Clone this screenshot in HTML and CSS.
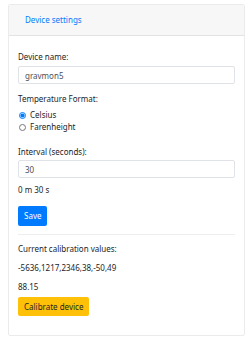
FILE: index.html
```html
<!DOCTYPE html>
<html lang="en">
  <head>
    <meta charset="UTF-8" />
    <meta name="viewport" content="width=device-width, initial-scale=1" />
    <title>Device settings</title>
    <link rel="stylesheet" href="styles.css">
  </head>
  <body>
    <div class="card">
      <div class="card-header">
        <a href="#" class="tab">Device settings</a>
      </div>
      <div class="card-body">
        <form>
          <label class="label" for="deviceName">Device name:</label>
          <input type="text" id="deviceName" class="field" value="gravmon5" />

          <p class="label group">Temperature Format:</p>
          <div class="radios">
            <label class="radio"><input type="radio" name="temp" checked /> Celsius</label>
            <label class="radio"><input type="radio" name="temp" /> Farenheight</label>
          </div>

          <label class="label interval" for="interval">Interval (seconds):</label>
          <input type="text" id="interval" class="field" value="30" />
          <p class="hint">0 m 30 s</p>

          <button type="button" class="btn save">Save</button>
        </form>

        <hr />

        <p class="text">Current calibration values:</p>
        <p class="text">-5636,1217,2346,38,-50,49</p>
        <p class="text">88.15</p>
        <button type="button" class="btn calibrate">Calibrate device</button>
      </div>
    </div>
  </body>
</html>
```

FILE: styles.css
```css
body {
  font-family: "Noto Sans", "Open Sans", sans-serif;
  font-size: 8px;
  line-height: 12px;
  color: #212529;
  margin: 0;
  padding: 4px 5px 0 8px;
}

.card {
  width: 237px;
  border: 1px solid rgba(0, 0, 0, 0.08);
  border-radius: 2px;
  box-sizing: border-box;
}

.card-header {
  background-color: #f7f7f7;
  border-bottom: 1px solid rgba(0, 0, 0, 0.08);
  padding: 9px 16px 9px;
}

.tab {
  color: #007bff;
  text-decoration: none;
}

.card-body {
  padding: 15px 9px 18px;
}

.label {
  display: block;
  margin: 0 0 3px;
}

.field {
  display: block;
  width: 100%;
  height: 18px;
  box-sizing: border-box;
  padding: 0 6px;
  font: inherit;
  color: #495057;
  border: 1px solid #dfe3e7;
  border-radius: 2px;
  outline: none;
}

.group {
  margin-top: 9px;
  margin-bottom: 4px;
}

.radio {
  display: flex;
  align-items: center;
  height: 12px;
}

.radio input {
  width: 7px;
  height: 7px;
  margin: 0 4px 0 1px;
  accent-color: #007bff;
}

.interval {
  margin-top: 13px;
  margin-bottom: 2px;
}

.hint {
  margin: 6px 0 10px;
}

.btn {
  display: block;
  font: inherit;
  border: none;
  border-radius: 2px;
  padding: 0 6px;
  height: 20px;
  cursor: pointer;
}

.save {
  background-color: #007bff;
  color: white;
}

hr {
  border: none;
  border-top: 1px solid #eceeef;
  margin: 8px 0 8px;
}

.text {
  margin: 0 0 7px;
}

.text:last-of-type {
  margin-bottom: 4px;
}

.calibrate {
  background-color: #ffc107;
  color: #212529;
  height: 19px;
}

.card-body {
  padding-bottom: 19px;
}
```
